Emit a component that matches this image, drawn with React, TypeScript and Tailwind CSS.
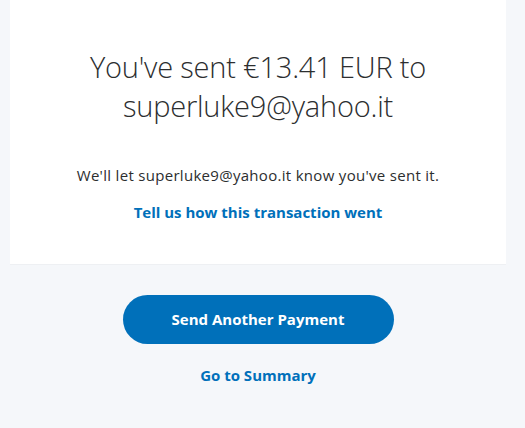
import React from 'react';

const font = { fontFamily: '"Open Sans", "Noto Sans", sans-serif' };

export default function App() {
  return (
    <div className="min-h-[428px] bg-[#f5f7fa]" style={font}>
      <div className="w-[516px] flex flex-col items-center">
        <div className="w-[496px] h-[265px] bg-white border-b border-[#eef0f3] flex flex-col items-center">
          <h1 className="mt-[47px] text-center text-[29px] leading-[39px] font-light text-[#2c2e2f] tracking-[-0.2px]">
            You've sent €13.41 EUR to
            <br />
            superluke9@yahoo.it
          </h1>
          <p className="mt-[40px] text-[15px] leading-[20px] text-[#2c2e2f] tracking-[0.3px]">
            We'll let superluke9@yahoo.it know you've sent it.
          </p>
          <a href="#" className="mt-[17px] text-[15px] leading-[20px] font-bold text-[#0070ba]">
            Tell us how this transaction went
          </a>
        </div>
        <button className="mt-[30px] w-[271px] h-[49px] rounded-full bg-[#0070ba] text-white text-[15px] font-bold">
          Send Another Payment
        </button>
        <a href="#" className="mt-[21px] text-[15px] leading-[20px] font-bold text-[#0070ba]">
          Go to Summary
        </a>
      </div>
    </div>
  );
}
